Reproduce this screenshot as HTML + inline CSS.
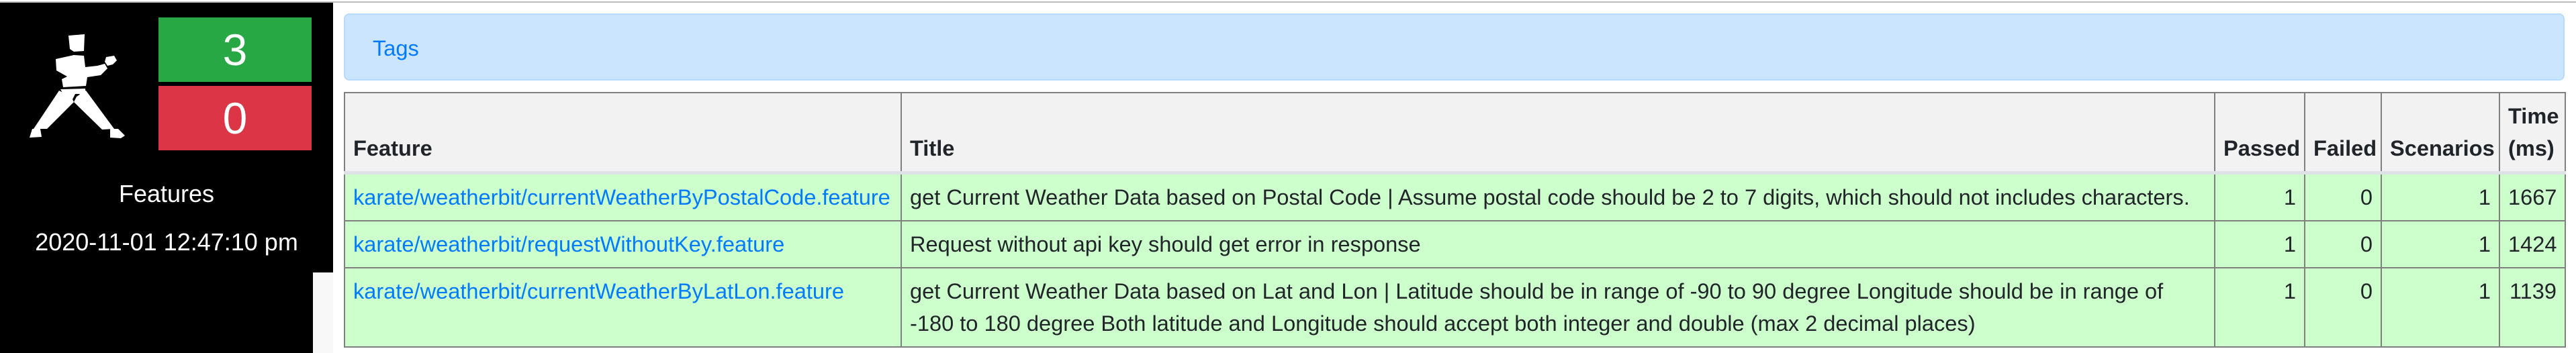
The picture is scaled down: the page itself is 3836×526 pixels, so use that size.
<!DOCTYPE html>
<html><head><meta charset="utf-8"><style>
*{margin:0;padding:0;box-sizing:border-box}
body{width:3836px;height:526px;background:#fff;font-family:"Liberation Sans",Arial,sans-serif;position:relative;overflow:hidden}
.abs{position:absolute}
table{position:absolute;left:512px;top:137px;width:3307px;border-collapse:collapse;table-layout:fixed;font-size:32.6px;color:#212529;border:2px solid #808080}
td,th{border:2px solid #808080;padding:10px 12px;line-height:48px;vertical-align:top;white-space:nowrap;overflow:hidden}
th{background:#f2f2f2;text-align:left;vertical-align:bottom;border-bottom:5px solid #dee2e6;font-weight:bold;height:113px}
td{background:#ccffcc}
td.n{text-align:right}
a{color:#007bff;text-decoration:none}
</style></head><body>
<div class="abs" style="left:0;top:2px;width:3836px;height:2px;background:#bdbdbd"></div>
<div class="abs" style="left:466px;top:406px;width:30px;height:120px;background:#f8f8f8"></div>
<div class="abs" style="left:0;top:4px;width:496px;height:402px;background:#000"></div>
<div class="abs" style="left:0;top:406px;width:466px;height:120px;background:#000"></div>
<svg class="abs" style="left:30px;top:40px" width="180" height="180" viewBox="0 0 180 180" fill="#fff">
<polygon points="72,13 96,11 95,36 80,37 74,33"/>
<polygon points="53,48 80,42 95,43 97,60 115,58 126,55 130,62 120,72 100,75 98,88 64,90 62,78 70,74 54,65"/>
<polygon points="128,45 140,43 144,50 138,56 130,58 126,52"/>
<polygon points="60,93 97,92 98,108 88,100 82,100 78,108 68,107 64,100"/>
<polygon points="58,95 76,104 80,112 40,152 20,152"/>
<polygon points="80,112 84,104 98,95 140,152 122,153"/>
<polygon points="18,152 30,152 32,164 14,165"/>
<polygon points="134,152 146,152 156,162 150,166 134,165"/>
</svg>
<div class="abs" style="left:236px;top:26px;width:228px;height:96px;background:#28a745;color:#fff;font-size:66px;text-align:center;line-height:96px">3</div>
<div class="abs" style="left:236px;top:128px;width:228px;height:96px;background:#dc3545;color:#fff;font-size:66px;text-align:center;line-height:96px">0</div>
<div class="abs" style="left:0;top:266px;width:496px;text-align:center;color:#fff;font-size:36px;line-height:46px">Features</div>
<div class="abs" style="left:0;top:338px;width:496px;text-align:center;color:#fff;font-size:36px;line-height:46px">2020-11-01 12:47:10 pm</div>
<div class="abs" style="left:512px;top:20px;width:3307px;height:100px;background:#cce5ff;border:2px solid #b8daff;border-radius:8px"></div>
<div class="abs" style="left:555px;top:52px;font-size:32.6px;color:#007bff;line-height:40px">Tags</div>
<table>
<colgroup><col style="width:829px"><col style="width:1956px"><col style="width:134px"><col style="width:114px"><col style="width:176px"><col style="width:98px"></colgroup>
<tr><th>Feature</th><th>Title</th><th>Passed</th><th>Failed</th><th>Scenarios</th><th style="white-space:normal">Time (ms)</th></tr>
<tr style="height:68px"><td><a>karate/weatherbit/currentWeatherByPostalCode.feature</a></td><td>get Current Weather Data based on Postal Code | Assume postal code should be 2 to 7 digits, which should not includes characters.</td><td class="n">1</td><td class="n">0</td><td class="n">1</td><td class="n">1667</td></tr>
<tr style="height:66px"><td><a>karate/weatherbit/requestWithoutKey.feature</a></td><td>Request without api key should get error in response</td><td class="n">1</td><td class="n">0</td><td class="n">1</td><td class="n">1424</td></tr>
<tr><td><a>karate/weatherbit/currentWeatherByLatLon.feature</a></td><td>get Current Weather Data based on Lat and Lon | Latitude should be in range of -90 to 90 degree Longitude should be in range of<br>-180 to 180 degree Both latitude and Longitude should accept both integer and double (max 2 decimal places)</td><td class="n">1</td><td class="n">0</td><td class="n">1</td><td class="n">1139</td></tr>
</table>
</body></html>
